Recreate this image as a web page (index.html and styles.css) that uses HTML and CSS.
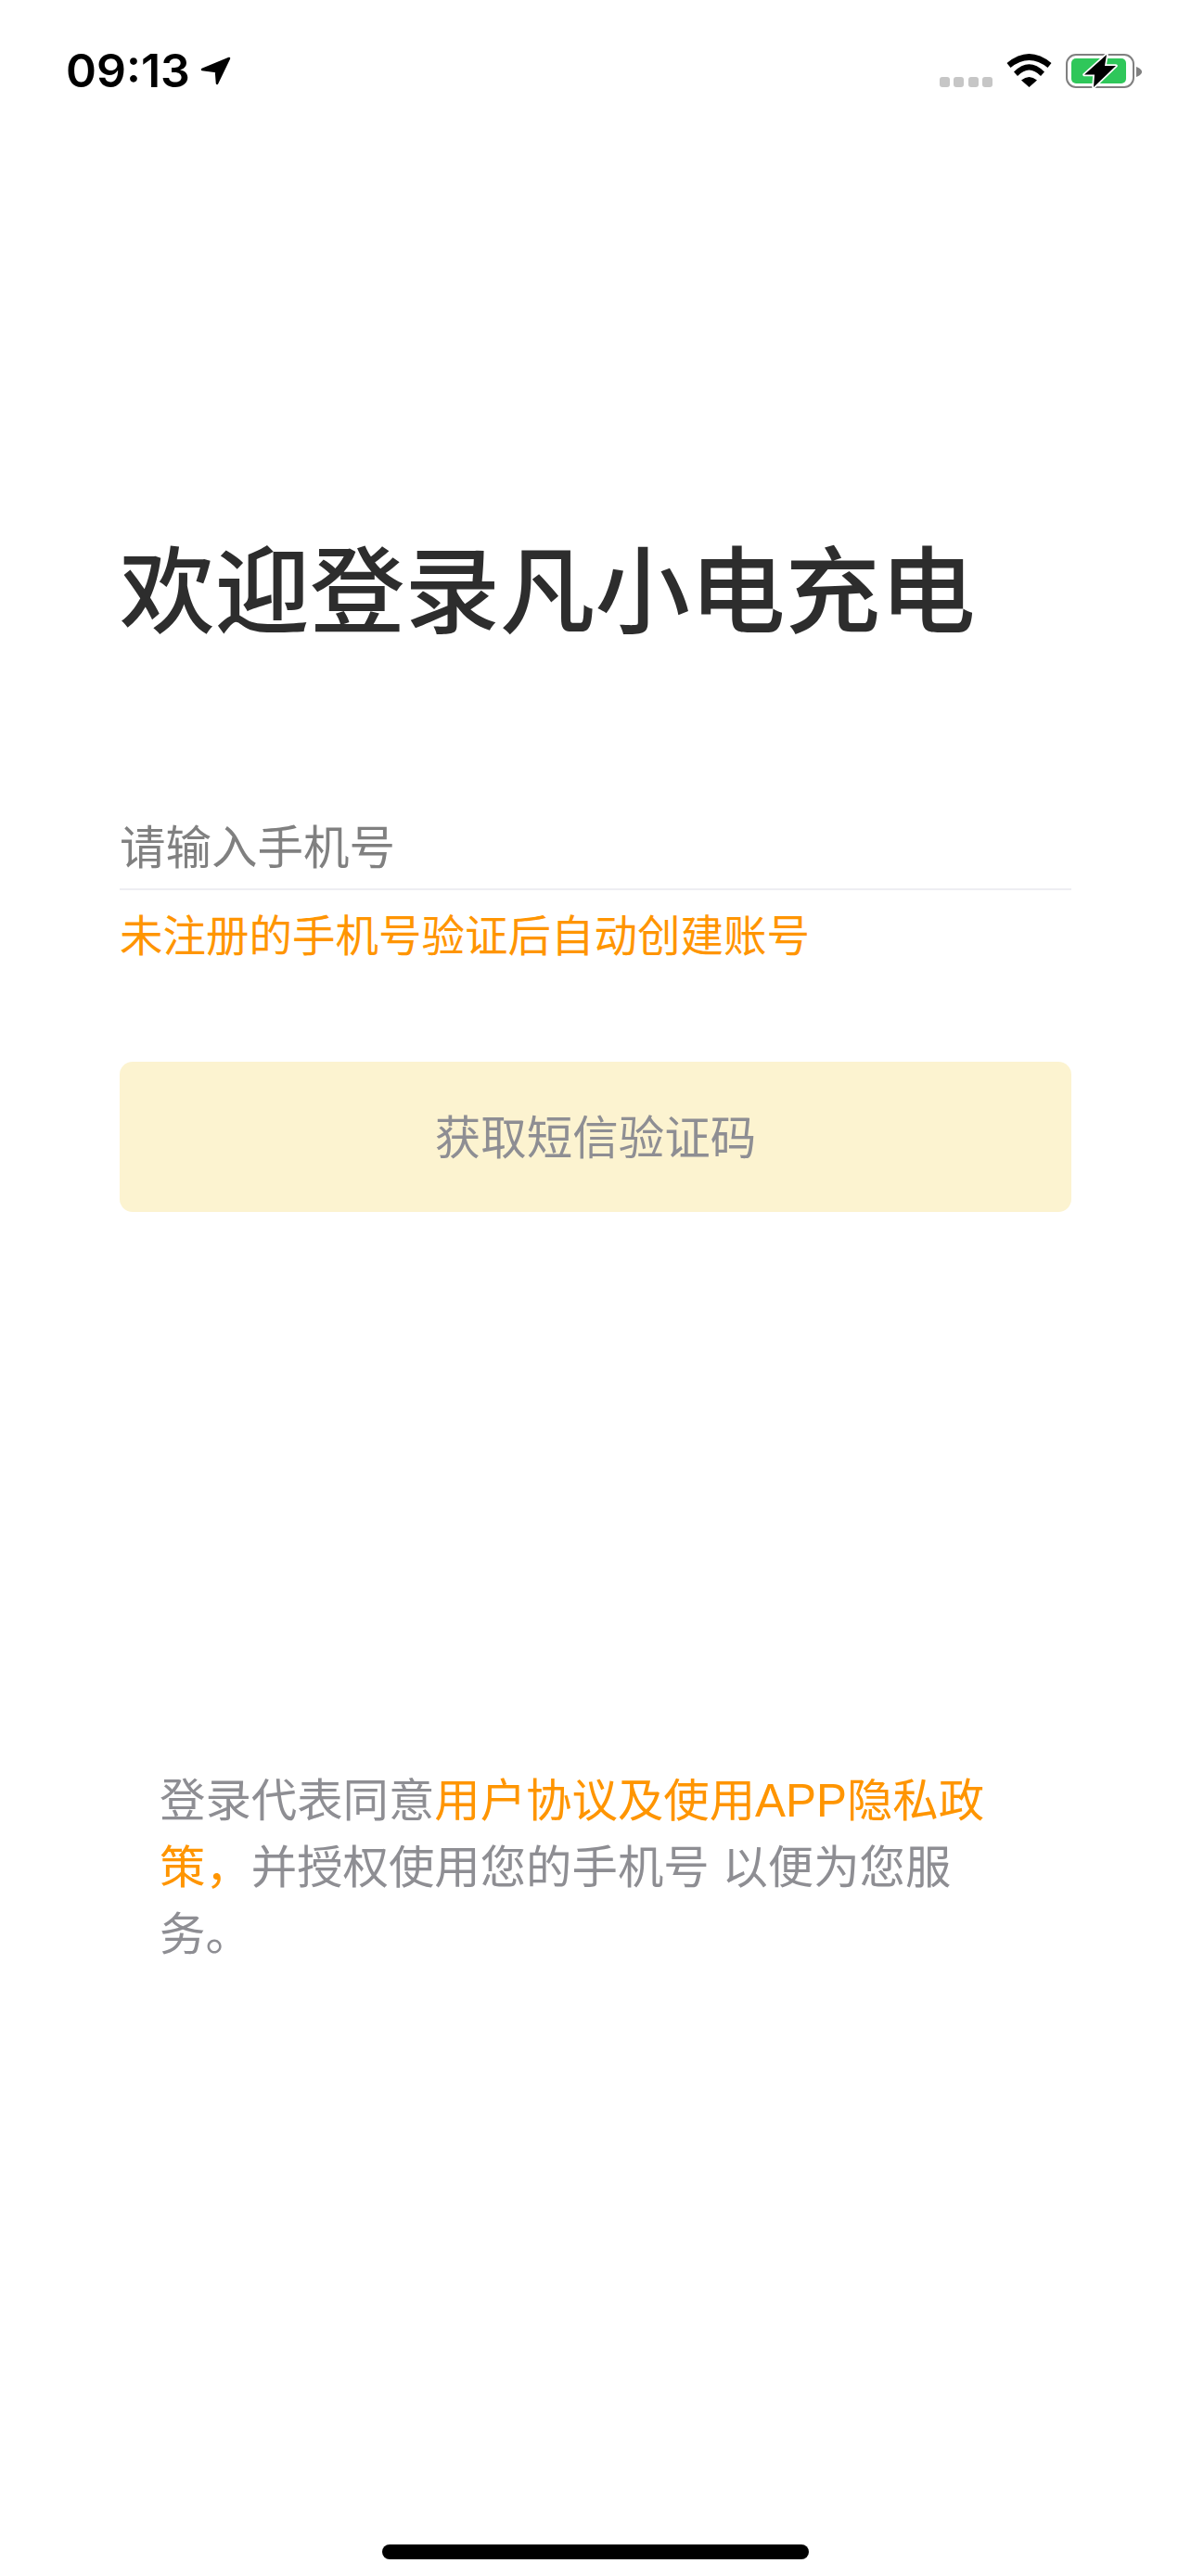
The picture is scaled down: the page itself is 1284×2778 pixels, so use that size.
FILE: index.html
```html
<!DOCTYPE html>
<html lang="zh">
<head>
<meta charset="utf-8">
<title>登录</title>
<link rel="stylesheet" href="styles.css">
</head>
<body>
<div class="screen">
  <header class="status">
    <div class="status-left">
      <span class="time">09:13</span>
      <svg class="loc" width="33" height="31" viewBox="0 0 33 31"><path d="M31 2 L2 14 L17 16 L18 29 Z" fill="#000" stroke="#000" stroke-width="2.500" stroke-linejoin="round"/></svg>
    </div>
    <div class="status-right">
      <div class="signal"><i></i><i></i><i></i><i></i></div>
      <svg class="wifi" width="49" height="36" viewBox="0 0 49 36"><path d="M0.500 10 Q24.500 -10 48.500 10 L44.500 15 Q24.500 -1 4.500 15 Z M8 19.500 Q24.500 3 41 19.500 L37 24 Q24.500 11 12 24 Z M16 28.500 Q24.500 21.500 33 28.500 L24.500 36 Z" fill="#000"/></svg>
      <svg class="batt" width="82" height="37" viewBox="0 0 82 37"><rect x="1" y="1" width="72" height="35" rx="10" fill="none" stroke="#808080" stroke-width="2"/><rect x="6" y="5" width="59" height="27" rx="5" fill="#2fc75a"/><path d="M76 14 C79 15 82 17 82 19.500 C82 22 79 24 76 25 Z" fill="#808080"/><path d="M44 1 L20 22.500 H31 L30 36 L54 13 H42 Z" fill="#000" stroke="#fff" stroke-width="3.500" stroke-linejoin="round" paint-order="stroke"/></svg>
    </div>
  </header>
  <main class="content">
    <h1 class="title">欢迎登录凡小电充电</h1>
    <div class="field"><span class="placeholder">请输入手机号</span></div>
    <p class="hint">未注册的手机号验证后自动创建账号</p>
    <button class="submit" type="button">获取短信验证码</button>
    <p class="agreement">登录代表同意<span class="link">用户协议及使用APP隐私政策，</span>并授权使用您的手机号 以便为您服务。</p>
  </main>
  <div class="home-bar"></div>
</div>
</body>
</html>
```
FILE: styles.css
```css
* { box-sizing: border-box; }
html, body { margin: 0; padding: 0; background: #fff; }
body { font-family: "Liberation Sans", "Noto Sans CJK SC", sans-serif; }
.screen { position: relative; width: 1284px; height: 2778px; overflow: hidden; }
.status { height: 132px; padding: 58px 53px 0 71px; display: flex; justify-content: space-between; align-items: flex-start; }
.status-left { display: flex; align-items: center; gap: 11px; height: 37px; }
.time { font-family: Inter, "Liberation Sans", sans-serif; font-weight: 600; font-size: 50px; line-height: 37px; color: #000; }
.status-right { display: flex; align-items: flex-end; gap: 15px; height: 37px; }
.signal { display: flex; gap: 4.500px; margin-bottom: 1px; }
.signal i { width: 11px; height: 11px; background: #c6c6c6; border-radius: 3px; }
.wifi { margin-bottom: 1px; }
.content { padding: 0 129px; }
.title { margin: 438px 0 0; font-size: 102.500px; line-height: 140px; font-weight: 500; color: #2d2d2d; }
.field { margin-top: 180px; height: 70px; border-bottom: 2px solid #eeeef2; }
.placeholder { font-size: 49.500px; line-height: 50px; color: #808080; }
.hint { margin: 20px 0 0; font-size: 46.500px; line-height: 60px; color: #ff9500; }
.submit { display: block; width: 100%; height: 162px; margin: 105px 0 0; padding: 0 0 6px; border: 0; border-radius: 14px; background: #fcf3d0; color: #8e8e93; font: inherit; font-size: 49.500px; }
.agreement { margin: 599px 0 0; padding: 0 85px 0 43px; font-size: 49.400px; line-height: 72px; color: #8e8e93; }
.link { color: #ff9500; }
.home-bar { position: absolute; left: 412px; bottom: 18px; width: 460px; height: 16px; border-radius: 8px; background: #000; }
```
